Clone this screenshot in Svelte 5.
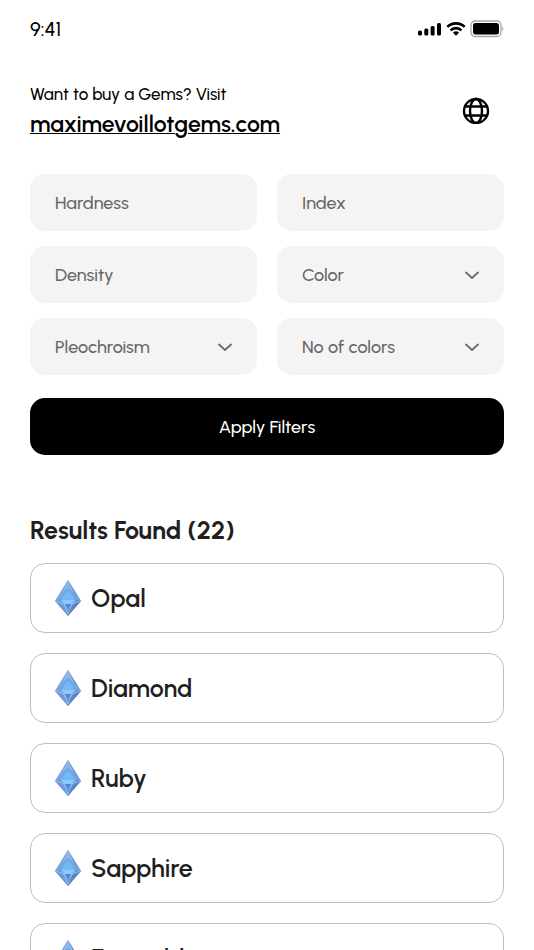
<script lang="ts">
  type Field = { name: string; options?: string[] };

  const fields: Field[] = [
    { name: 'Hardness' },
    { name: 'Index' },
    { name: 'Density' },
    { name: 'Color', options: ['Blue', 'Green', 'Red', 'White'] },
    { name: 'Pleochroism', options: ['None', 'Weak', 'Strong'] },
    { name: 'No of colors', options: ['1', '2', '3'] },
  ];

  const gems = ['Opal', 'Diamond', 'Ruby', 'Sapphire', 'Emerald'];
  const total = 22;

  let values: Record<string, string> = $state(
    Object.fromEntries(fields.map((f) => [f.name, '']))
  );

  function applyFilters(e: Event) {
    e.preventDefault();
  }
</script>

<div class="screen">
  <div class="status">
    <span class="time">9:41</span>
    <div class="status-icons">
      <svg width="24" height="14" viewBox="0 0 24 14" aria-hidden="true">
        <rect x="0" y="8.500" width="4" height="5" rx="1.500" />
        <rect x="6.300" y="6.500" width="4" height="7" rx="1.500" />
        <rect x="12.600" y="4" width="4" height="9.500" rx="1.500" />
        <rect x="19" y="1" width="4" height="12.500" rx="1.500" />
      </svg>
      <svg width="20" height="14" viewBox="0 0 20 14" aria-hidden="true">
        <g fill="none" stroke="#000" stroke-width="2.600">
          <path d="M1.300 4.900a12.400 12.400 0 0 1 17.400 0" />
          <path d="M4.500 8.400a7.900 7.900 0 0 1 11 0" />
        </g>
        <path d="M10 13.800 7 10.700a4.400 4.400 0 0 1 6 0z" />
      </svg>
      <svg width="34" height="18" viewBox="0 0 34 18" aria-hidden="true">
        <rect x="1" y="1" width="30" height="15.500" rx="4" fill="none" stroke="#a6a6a6" stroke-width="1.300" />
        <rect x="3" y="3" width="26" height="11.500" rx="2.500" />
        <path d="M32.300 6.500v4.500c1.600-.8 1.600-3.700 0-4.500z" fill="#a6a6a6" />
      </svg>
    </div>
  </div>

  <header>
    <div>
      <p>Want to buy a Gems? Visit</p>
      <a href="#shop">maximevoillotgems.com</a>
    </div>
    <button type="button" class="globe" aria-label="Language">
      <svg width="28" height="28" viewBox="0 0 28 28" fill="none" stroke="#000" stroke-width="2.400">
        <circle cx="14" cy="15" r="12" />
        <ellipse cx="14" cy="15" rx="6" ry="12" />
        <path d="M3 10.500h22M3 19.500h22" />
      </svg>
    </button>
  </header>

  <form onsubmit={applyFilters}>
    <div class="fields">
      {#each fields as field}
        {#if field.options}
          <div class="select">
            <select aria-label={field.name} bind:value={values[field.name]}>
              <option value="">{field.name}</option>
              {#each field.options as option}
                <option value={option}>{option}</option>
              {/each}
            </select>
            <svg width="16" height="10" viewBox="0 0 16 10" aria-hidden="true">
              <path d="M2 2.500l6 5.500 6-5.500" fill="none" stroke="#6b6b6b" stroke-width="1.800" stroke-linecap="round" stroke-linejoin="round" />
            </svg>
          </div>
        {:else}
          <input type="text" aria-label={field.name} placeholder={field.name} bind:value={values[field.name]} />
        {/if}
      {/each}
    </div>
    <button type="submit" class="apply">Apply Filters</button>
  </form>

  <h2>Results Found ({total})</h2>

  <ul>
    {#each gems as gem}
      <li>
        <svg width="26" height="36" viewBox="0 0 26 36" aria-hidden="true">
          <path d="M13 0 26 21 13 36 0 21z" fill="#7aa3dc" />
          <path d="M13 0 7 13 0 21z" fill="#86abdf" />
          <path d="M13 0l6 13 7 8z" fill="#7796ce" />
          <path d="M13 0 7 13l6-5 6 5z" fill="#8fb4e6" />
          <path d="M7 13l6-5 6 5 3 7-9 10-9-10z" fill="#6aa9ea" />
          <path d="M13 11l4 4 2 5H7l2-5z" fill="#74b9f6" />
          <path d="M6 20h14l-4 4h-6z" fill="#8fc9fb" />
          <path d="M10 24h6l-3 5z" fill="#4f87d3" />
          <path d="M0 21l4-1 9 10v6z" fill="#6f9ad8" />
          <path d="M26 21l-4-1-9 10v6z" fill="#5d83c4" />
          <path d="M1 21l8 3 4 10M25 21l-8 3-4 10" fill="none" stroke="#a9cdf3" stroke-width=".7" />
        </svg>
        <span>{gem}</span>
      </li>
    {/each}
  </ul>
</div>

<style>
  :global(body) {
    background: #fff;
  }

  .screen {
    padding: 16px 30px 0;
    font-family: Urbanist, Lato, "Liberation Sans", sans-serif;
    font-weight: 500;
    color: #000;
  }

  .status {
    display: flex;
    align-items: center;
    justify-content: space-between;
    height: 25px;
  }

  .time {
    font-size: 20px;
  }

  .status-icons {
    display: flex;
    align-items: center;
    gap: 4px;
  }

  header {
    display: flex;
    align-items: center;
    justify-content: space-between;
    margin-top: 39px;
    padding-right: 14px;
  }

  header p {
    margin: 0;
    font-size: 17px;
    line-height: 28px;
  }

  header a {
    display: block;
    color: #000;
    font-size: 23px;
    font-weight: 600;
    line-height: 32px;
    text-decoration-thickness: 1px;
    text-underline-offset: 1px;
  }

  .globe {
    display: flex;
    padding: 0;
    border: none;
    background: none;
  }

  .fields {
    display: grid;
    grid-template-columns: 1fr 1fr;
    gap: 15px 20px;
    margin-top: 34px;
  }

  input,
  select {
    box-sizing: border-box;
    width: 100%;
    height: 57px;
    padding: 0 25px;
    border: none;
    border-radius: 15px;
    background: #f4f4f4;
    color: #666;
    font: inherit;
    font-size: 18px;
    appearance: none;
  }

  input::placeholder {
    color: #666;
    opacity: 1;
  }

  .select {
    position: relative;
  }

  .select svg {
    position: absolute;
    top: 24px;
    right: 24px;
    pointer-events: none;
  }

  .apply {
    width: 100%;
    height: 57px;
    margin-top: 23px;
    border: none;
    border-radius: 15px;
    background: #000;
    color: #fff;
    font: inherit;
    font-size: 18px;
  }

  h2 {
    margin: 58px 0 0;
    color: #1f1f1f;
    font-size: 25px;
    font-weight: 700;
    line-height: 34px;
  }

  ul {
    display: flex;
    flex-direction: column;
    gap: 20px;
    margin: 16px 0 0;
    padding: 0 0 30px;
    list-style: none;
  }

  li {
    box-sizing: border-box;
    display: flex;
    align-items: center;
    gap: 10px;
    height: 70px;
    padding: 0 24px;
    border: 1px solid #bdbdbd;
    border-radius: 15px;
    color: #1f1f1f;
    font-size: 25px;
    font-weight: 600;
  }
</style>
